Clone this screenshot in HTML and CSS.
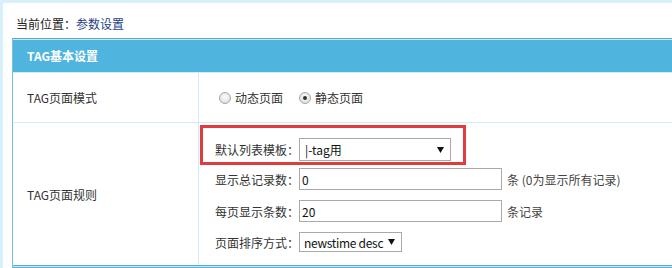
FILE: index.html
```html
<!DOCTYPE html>
<html lang="zh-CN">
<head>
<meta charset="utf-8">
<title>参数设置</title>
<link rel="stylesheet" href="styles.css">
</head>
<body>
<div class="page">
  <div class="crumb">当前位置<span class="colon">：</span><a class="crumb-link">参数设置</a></div>
  <div class="panel">
    <div class="panel-head">TAG基本设置</div>
    <div class="row row-mode">
      <div class="label">TAG页面模式</div>
      <div class="cell radios">
        <label class="opt"><span class="radio"></span>动态页面</label>
        <label class="opt"><span class="radio checked"></span>静态页面</label>
      </div>
    </div>
    <div class="row row-rule">
      <div class="label">TAG页面规则</div>
      <div class="cell fields">
        <div class="field highlight">
          <span class="flabel">默认列表模板<span class="colon">：</span></span>
          <div class="select select-wide"><span>|-tag用</span><svg class="arrow" width="7" height="6" viewBox="0 0 7 6"><polygon points="0,0 7,0 3.5,6" fill="#111"/></svg></div>
        </div>
        <div class="field f-total">
          <span class="flabel">显示总记录数<span class="colon">：</span></span>
          <input class="text" type="text" value="0">
          <span class="after">条 (0为显示所有记录)</span>
        </div>
        <div class="field f-per">
          <span class="flabel">每页显示条数<span class="colon">：</span></span>
          <input class="text" type="text" value="20">
          <span class="after">条记录</span>
        </div>
        <div class="field f-order">
          <span class="flabel">页面排序方式<span class="colon">：</span></span>
          <div class="select select-small"><span class="opt-text">newstime desc</span><svg class="arrow" width="7" height="6" viewBox="0 0 7 6"><polygon points="0,0 7,0 3.5,6" fill="#111"/></svg></div>
        </div>
      </div>
    </div>
    <div class="panel-head next"></div>
  </div>
</div>
</body>
</html>
```
FILE: styles.css
```css
html, body {
  margin: 0;
  padding: 0;
  background: #fff;
  overflow: hidden;
}
body {
  font-family: "Noto Sans CJK SC", "Liberation Sans", sans-serif;
  font-size: 12px;
  color: #333;
}
.page {
  box-sizing: border-box;
  height: 268px;
  border-top: 3px solid #d6f1fc;
  border-left: 3px solid #d6f1fc;
  padding-left: 9px;
}
.colon {
  font-family: "Noto Sans CJK TC", "Noto Sans CJK SC", sans-serif;
}
.crumb {
  margin-top: 11px;
  height: 20px;
  line-height: 20px;
  margin-bottom: 4px;
  padding-left: 4px;
  color: #222;
}
.crumb-link {
  color: #1f3f86;
}
.panel {
  border-left: 1px solid #7cc0e0;
  border-top: 1px solid #5aa9cf;
}
.panel-head {
  height: 33px;
  line-height: 33px;
  background: #4fb4de;
  box-shadow: inset 0 1px 0 #c9e9f6;
  color: #fff;
  font-weight: bold;
  padding-left: 14px;
}
.panel-head.next {
  border-top: 1px solid #5aa9cf;
  height: 10px;
}
.row {
  display: grid;
  grid-template-columns: 186px 1fr;
  border-top: 1px solid #d3ebf5;
}
.row-mode { height: 49px; }
.label {
  box-sizing: border-box;
  border-right: 1px solid #d3ebf5;
  padding-left: 14px;
  display: flex;
  align-items: center;
}
.cell {
  display: flex;
}
.radios {
  align-items: center;
  padding-left: 20px;
}
.opt {
  display: flex;
  align-items: center;
  gap: 4px;
  margin-right: 16px;
}
.radio {
  box-sizing: border-box;
  width: 12px;
  height: 12px;
  border-radius: 50%;
  border: 1px solid #a8a8a8;
  background: radial-gradient(circle at 50% 40%, #fdfdfd 0%, #e6e6e6 60%, #d2d2d2 100%);
  display: flex;
  align-items: center;
  justify-content: center;
}
.radio.checked::after {
  content: "";
  width: 4px;
  height: 4px;
  border-radius: 50%;
  background: #333;
}
.fields {
  flex-direction: column;
  padding-bottom: 13px;
}
.field {
  display: flex;
  align-items: center;
  padding-left: 16px;
}
.highlight {
  box-sizing: border-box;
  width: 266px;
  margin-top: 2px;
  margin-left: 1px;
  border: 3px solid #e23b3f;
  padding: 10px 0 1px 12px;
}
.f-total { margin-top: 3px; }
.f-per { margin-top: 10px; }
.f-order { margin-top: 10px; }
.flabel {
  width: 84px;
  white-space: nowrap;
}
.select {
  box-sizing: border-box;
  display: flex;
  align-items: center;
  justify-content: space-between;
  border: 1px solid #a9a9a9;
  background: #fff;
  color: #111;
  padding: 0 6px 0 5px;
  white-space: nowrap;
}
.select-wide { width: 152px; height: 23px; }
.select-small { width: 103px; height: 20px; padding: 0 6px 0 4px; }
.opt-text { letter-spacing: -0.3px; }
.arrow { display: block; flex: none; }
.text {
  box-sizing: border-box;
  width: 203px;
  height: 22px;
  border: 1px solid #a9a9a9;
  padding: 0 2px;
  margin: 0;
  font: inherit;
  color: #111;
}
.after {
  margin-left: 5px;
  color: #444;
}
```
